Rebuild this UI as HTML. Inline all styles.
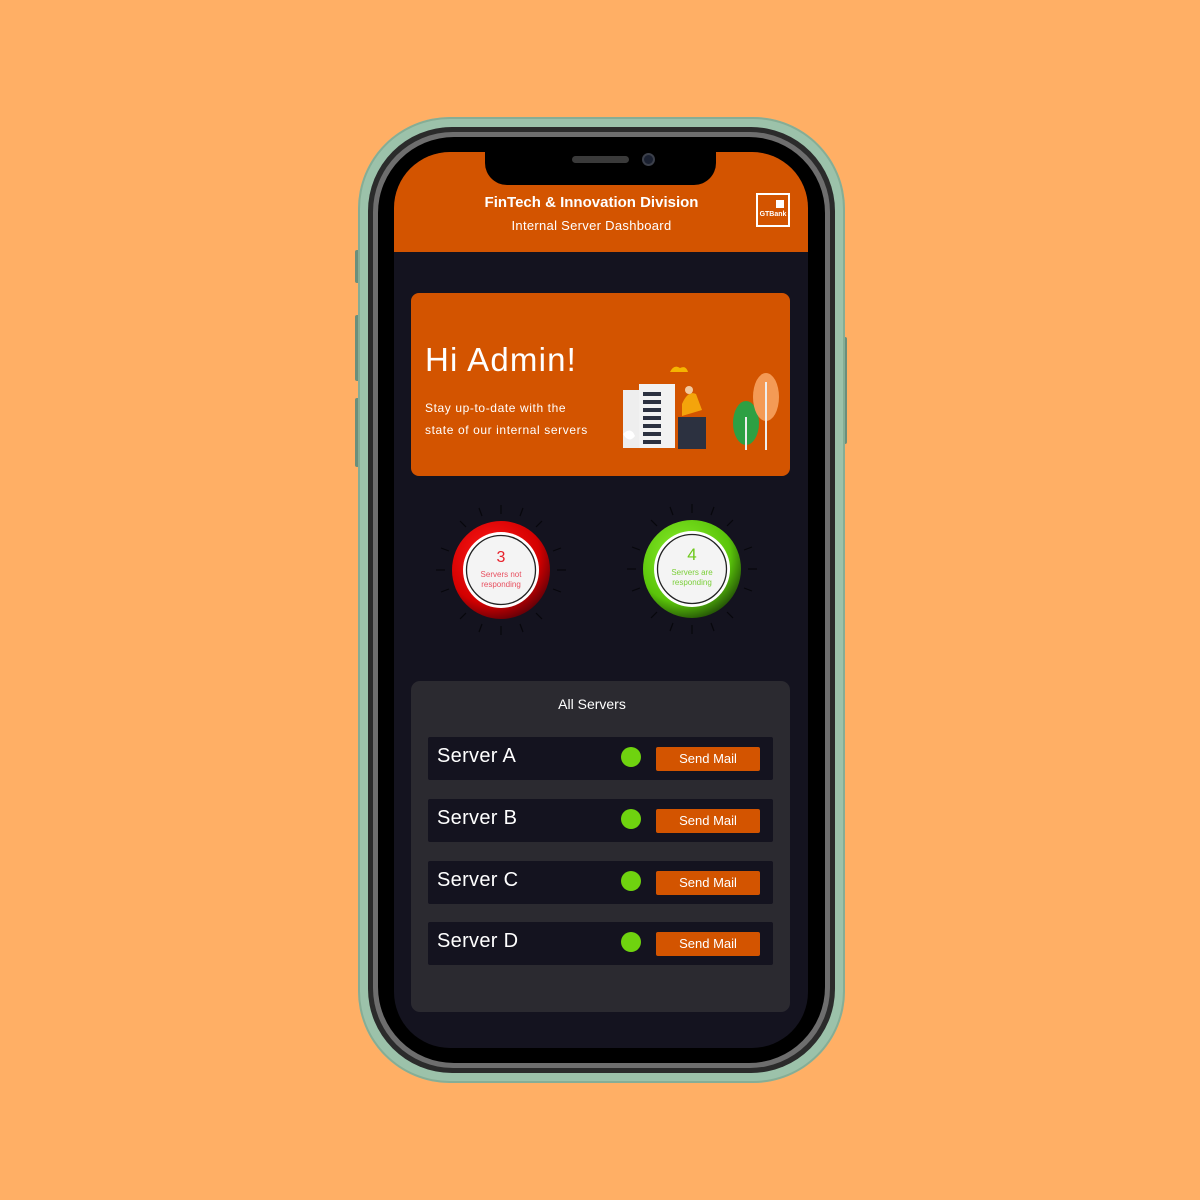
<!DOCTYPE html>
<html><head><meta charset="utf-8"><style>
*{margin:0;padding:0;box-sizing:border-box}
body{width:1200px;height:1200px;background:#FFAF65;position:relative;overflow:hidden;font-family:"Liberation Sans",sans-serif}
.abs{position:absolute}
.frame{left:358px;top:117px;width:487px;height:966px;border-radius:92px;background:#9cc2aa;box-shadow:inset 0 0 0 2px #86ad95}
.b1{left:368px;top:127px;width:467px;height:946px;border-radius:84px;background:#2b2b2b}
.b2{left:373px;top:132px;width:457px;height:936px;border-radius:80px;background:#6e6e6e}
.b3{left:378px;top:137px;width:447px;height:926px;border-radius:76px;background:#000}
.screen{left:394px;top:152px;width:414px;height:896px;border-radius:56px;background:#14131f;overflow:hidden}
.hdr{left:0;top:0;width:414px;height:100px;background:#D35400}
.notch{left:91px;top:0;width:231px;height:33px;background:#000;border-radius:0 0 22px 22px}
.btn{background:#6a8f7c;border-radius:2px}
.t{color:#fff;white-space:nowrap}
.row{left:17px;width:345px;height:43px;background:#14131f;border-radius:2px}
.row .n{left:9px;top:8px;font-size:20px;color:#fff;letter-spacing:.3px}
.row .d{left:193px;top:10px;width:20px;height:20px;border-radius:50%;background:#6fd30f}
.row .s{left:228px;top:10px;width:104px;height:24px;background:#D35400;border-radius:2px;color:#fff;font-size:13px;text-align:center;line-height:24px}
</style></head><body>
<div class="abs btn" style="left:355px;top:250px;width:5px;height:33px"></div>
<div class="abs btn" style="left:355px;top:315px;width:5px;height:66px"></div>
<div class="abs btn" style="left:355px;top:398px;width:5px;height:69px"></div>
<div class="abs btn" style="left:842px;top:337px;width:5px;height:107px"></div>
<div class="abs frame"></div>
<div class="abs b1"></div>
<div class="abs b2"></div>
<div class="abs b3"></div>
<div class="abs screen">
  <div class="abs hdr"></div>
  <div class="abs notch"></div>
  <div class="abs" style="left:178px;top:4px;width:57px;height:7px;border-radius:4px;background:#3a3a3a"></div>
  <div class="abs" style="left:248px;top:1px;width:13px;height:13px;border-radius:50%;background:#1a2030;border:2px solid #3b3f4a"></div>
  <div class="abs t" style="left:0;width:395px;text-align:center;top:42px;font-size:15px;font-weight:bold">FinTech &amp; Innovation Division</div>
  <div class="abs t" style="left:0;width:395px;text-align:center;top:66px;font-size:13px;letter-spacing:.3px">Internal Server Dashboard</div>
  <div class="abs" style="left:362px;top:41px;width:34px;height:34px;border:2px solid #fff"></div>
  <div class="abs" style="left:382px;top:48px;width:8px;height:8px;background:#fff"></div>
  <div class="abs t" style="left:363px;top:59px;width:32px;text-align:center;font-size:7px;font-weight:bold">GTBank</div>

  <div class="abs" style="left:17px;top:141px;width:379px;height:183px;background:#D35400;border-radius:8px"></div>
  <div class="abs t" style="left:31px;top:189px;font-size:33px;letter-spacing:1.2px">Hi Admin!</div>
  <div class="abs t" style="left:31px;top:249px;font-size:12px;letter-spacing:.6px">Stay up-to-date with the</div>
  <div class="abs t" style="left:31px;top:271px;font-size:12px;letter-spacing:.6px">state of our internal servers</div>
  <svg class="abs" style="left:224px;top:210px" width="165" height="100" viewBox="0 0 165 100">
    <path d="M52 10 q4-8 10-4 q6-3 8 4 z" fill="#f5b400"/>
    <rect x="5" y="28" width="22" height="58" fill="#eee"/>
    <rect x="21" y="22" width="36" height="64" fill="#f2f2f2"/>
    <g fill="#2c3140"><rect x="25" y="30" width="18" height="4"/><rect x="25" y="38" width="18" height="4"/><rect x="25" y="46" width="18" height="4"/><rect x="25" y="54" width="18" height="4"/><rect x="25" y="62" width="18" height="4"/><rect x="25" y="70" width="18" height="4"/><rect x="25" y="78" width="18" height="4"/></g>
    <rect x="60" y="55" width="28" height="32" fill="#2c3140"/>
    <path d="M64 42 q6-14 14-10 l6 16 -20 6z" fill="#f4a40b"/>
    <circle cx="71" cy="28" r="4" fill="#f2c9a0"/>
    <path d="M5 72 q8-8 12 2 q-6 8-12-2z" fill="#fff"/>
    <ellipse cx="128" cy="61" rx="13" ry="22" fill="#2ea043"/>
    <ellipse cx="148" cy="35" rx="13" ry="24" fill="#f49a55"/>
    <path d="M128 55 v33 M148 20 v68" stroke="#eee" stroke-width="2"/>
  </svg>

  <svg class="abs" style="left:40px;top:345px" width="340" height="150" viewBox="0 0 340 150">
    <defs>
      <radialGradient id="rg" cx="40%" cy="35%" r="70%"><stop offset="0" stop-color="#ff1a1a"/><stop offset=".7" stop-color="#d40000"/><stop offset="1" stop-color="#5a0008"/></radialGradient>
      <radialGradient id="gg" cx="40%" cy="35%" r="70%"><stop offset="0" stop-color="#8cf02c"/><stop offset=".7" stop-color="#5ac40a"/><stop offset="1" stop-color="#1f4a06"/></radialGradient>
    </defs>
    <g stroke="#07070c" stroke-width="1.2" transform="translate(0,3)">
      <path d="M67 5v9M67 126v9M2 70h9M123 70h9M26 21l6 6M102 113l6 6M108 21l-6 6M32 113l-6 6M45 8l3 8M86 124l3 8M89 8l-3 8M48 124l-3 8M7 48l8 3M119 89l8 3M127 48l-8 3M15 89l-8 3"/>
    </g>
    <g transform="translate(191,2)" stroke="#07070c" stroke-width="1.2"><path d="M67 5v9M67 126v9M2 70h9M123 70h9M26 21l6 6M102 113l6 6M108 21l-6 6M32 113l-6 6M45 8l3 8M86 124l3 8M89 8l-3 8M48 124l-3 8M7 48l8 3M119 89l8 3M127 48l-8 3M15 89l-8 3"/></g>
    <circle cx="67" cy="73" r="49" fill="url(#rg)"/>
    <circle cx="67" cy="73" r="38" fill="#fff"/>
    <circle cx="67" cy="73" r="34.5" fill="#f4f4f4" stroke="#222" stroke-width="1.3"/>
    <text x="67" y="65" text-anchor="middle" font-size="16" fill="#e8202a" font-family="Liberation Sans">3</text>
    <text x="67" y="80" text-anchor="middle" font-size="8" fill="#e85060" font-family="Liberation Sans">Servers not</text>
    <text x="67" y="90" text-anchor="middle" font-size="8" fill="#e85060" font-family="Liberation Sans">responding</text>
    <circle cx="258" cy="72" r="49" fill="url(#gg)"/>
    <circle cx="258" cy="72" r="38" fill="#fff"/>
    <circle cx="258" cy="72" r="34.5" fill="#f4f4f4" stroke="#222" stroke-width="1.3"/>
    <text x="258" y="63" text-anchor="middle" font-size="17" fill="#6cc81a" font-family="Liberation Sans">4</text>
    <text x="258" y="78" text-anchor="middle" font-size="8" fill="#7ccf3a" font-family="Liberation Sans">Servers are</text>
    <text x="258" y="88" text-anchor="middle" font-size="8" fill="#7ccf3a" font-family="Liberation Sans">responding</text>
  </svg>

  <div class="abs" style="left:17px;top:529px;width:379px;height:331px;background:#2b2a30;border-radius:9px">
    <div class="abs t" style="left:0;width:362px;text-align:center;top:15px;font-size:14px">All Servers</div>
    <div class="abs row" style="top:56px"><div class="abs n">Server A</div><div class="abs d"></div><div class="abs s">Send Mail</div></div>
    <div class="abs row" style="top:118px"><div class="abs n">Server B</div><div class="abs d"></div><div class="abs s">Send Mail</div></div>
    <div class="abs row" style="top:180px"><div class="abs n">Server C</div><div class="abs d"></div><div class="abs s">Send Mail</div></div>
    <div class="abs row" style="top:241px"><div class="abs n">Server D</div><div class="abs d"></div><div class="abs s">Send Mail</div></div>
  </div>
</div>
</body></html>
